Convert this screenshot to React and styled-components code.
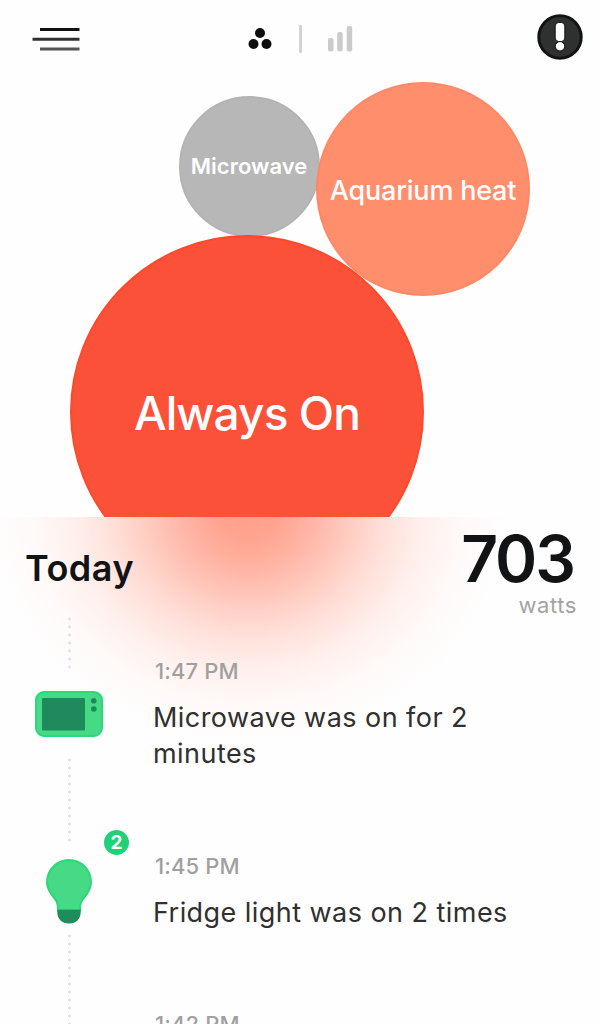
import React from "react";
import styled, { createGlobalStyle } from "styled-components";

const GlobalStyle = createGlobalStyle`
  *, *::before, *::after { box-sizing: border-box; }
  body { margin: 0; background: #fefefe; }
`;

const Screen = styled.div`
  display: flex;
  flex-direction: column;
  width: 600px;
  height: 1024px;
  overflow: hidden;
  background: #fefefe;
  color: #111314;
  font-family: Inter, "Liberation Sans", sans-serif;
`;

const Header = styled.header`
  display: grid;
  grid-template-columns: 1fr auto 1fr;
  align-items: center;
  height: 78px;
  flex: none;
  padding: 0 16px 0 31px;
`;

const IconButton = styled.button`
  display: flex;
  padding: 0;
  border: 0;
  background: none;
  justify-self: ${(p) => p.$side};
  margin-bottom: ${(p) => p.$lift || 0}px;
`;

const ViewSwitch = styled.nav`
  display: flex;
  align-items: center;
  gap: 25px;
  margin-right: 14px;
`;

const Divider = styled.span`
  width: 3px;
  height: 28px;
  border-radius: 1px;
  background: #d3d3d3;
  margin-left: 2px;
`;

const BubbleStage = styled.section`
  position: relative;
  height: 439px;
  flex: none;
  overflow: hidden;
`;

const Bubble = styled.div`
  position: absolute;
  left: ${(p) => p.$x - p.$r}px;
  top: ${(p) => p.$y - p.$r}px;
  width: ${(p) => p.$r * 2}px;
  height: ${(p) => p.$r * 2}px;
  border-radius: 50%;
  border: 2px solid ${(p) => p.$edge};
  background: ${(p) => p.$fill};
  display: flex;
  align-items: center;
  justify-content: center;
  color: #fff;
  white-space: nowrap;
  font-size: ${(p) => p.$size}px;
  font-weight: ${(p) => p.$weight};
  letter-spacing: ${(p) => p.$track}px;
  line-height: 1.3;
  padding-top: ${(p) => p.$drop}px;
`;

const Feed = styled.main`
  flex: 1;
  min-height: 0;
  background: radial-gradient(
    ellipse 260px 235px at 248px -6px,
    #ff9f8a 0%,
    #ffa490 12%,
    #ffb5a5 25%,
    #ffcbc0 39%,
    #ffe0d9 53%,
    #fff0ed 68%,
    #fffaf9 84%,
    #fefefe 100%
  );
`;

const Summary = styled.div`
  display: flex;
  justify-content: space-between;
  height: 100px;
  padding: 0 25px;
`;

const Title = styled.h1`
  margin: 28px 0 0;
  font-size: 36px;
  line-height: 46px;
  font-weight: 600;
  letter-spacing: 0.5px;
`;

const Usage = styled.div`
  display: flex;
  flex-direction: column;
  align-items: flex-end;
  padding-top: 9px;
`;

const UsageValue = styled.strong`
  margin-right: 1px;
  font-size: 64px;
  line-height: 66px;
  font-weight: 600;
  letter-spacing: -2px;
`;

const UsageUnit = styled.span`
  margin-right: -2px;
  font-size: 22px;
  line-height: 26px;
  letter-spacing: 0.6px;
  color: #a3a3a3;
`;

const Entry = styled.article`
  display: flex;
  height: ${(p) => p.$height}px;
`;

const Rail = styled.div`
  display: flex;
  flex-direction: column;
  align-items: center;
  width: 138px;
  flex: none;
`;

const Dots = styled.span`
  width: 3px;
  height: ${(p) => p.$height}px;
  background: radial-gradient(circle at 50% 50%, #e6e1ef 1.4px, transparent 1.8px) 0 -2px / 3px 8px repeat-y;
`;

const IconSlot = styled.div`
  position: relative;
  display: flex;
  align-items: center;
  justify-content: center;
  width: 100%;
  height: ${(p) => p.$height}px;
  padding-top: ${(p) => p.$drop || 0}px;
`;

const Badge = styled.span`
  position: absolute;
  left: 104px;
  top: -16px;
  width: 25px;
  height: 25px;
  border-radius: 50%;
  background: #1fd27a;
  color: #fff;
  font-size: 19px;
  line-height: 25px;
  font-weight: 700;
  text-align: center;
`;

const Details = styled.div`
  padding: ${(p) => p.$top}px 0 0 17px;
`;

const Time = styled.time`
  display: block;
  font-size: 22px;
  line-height: 28px;
  font-weight: 500;
  letter-spacing: 0.1px;
  color: #a0a0a0;
`;

const Message = styled.p`
  margin: 15px 0 0 -2px;
  font-size: 27px;
  line-height: 36px;
  font-weight: 400;
  letter-spacing: 0.45px;
  white-space: pre;
  color: #303030;
`;

const MenuIcon = () => (
  <svg width="50" height="26" viewBox="0 0 50 26">
    <path d="M9 3.5H48.5" stroke="#111" strokeWidth="3" />
    <path d="M1.5 13.2H48.5" stroke="#303030" strokeWidth="3" />
    <path d="M9 22.9H48.5" stroke="#555" strokeWidth="3" />
  </svg>
);

const BubblesIcon = () => (
  <svg width="24" height="24" viewBox="0 0 24 24" fill="#0d0d0d">
    <circle cx="12" cy="6" r="5" />
    <circle cx="5.5" cy="17" r="5" />
    <circle cx="18.5" cy="17" r="5" />
  </svg>
);

const BarsIcon = () => (
  <svg width="26" height="26" viewBox="0 0 26 26" fill="#cbcbcb">
    <rect x="1" y="12" width="5.5" height="13.5" rx="2" />
    <rect x="10.2" y="6" width="5.5" height="19.5" rx="2" />
    <rect x="19.7" y="0" width="5.5" height="25.5" rx="2" />
  </svg>
);

const AlertIcon = () => (
  <svg width="48" height="48" viewBox="0 0 48 48">
    <circle cx="24" cy="24" r="21.2" fill="#2f3130" stroke="#121413" strokeWidth="3" />
    <rect x="19.2" y="9.5" width="9.6" height="19" rx="3.5" fill="#fff" stroke="#111" strokeWidth="1" />
    <circle cx="24" cy="33.3" r="4.7" fill="#fff" stroke="#111" strokeWidth="1" />
  </svg>
);

const MicrowaveIcon = () => (
  <svg width="68" height="46" viewBox="0 0 68 46">
    <rect x="1" y="1" width="66" height="44" rx="8" fill="#46d986" stroke="#2bd87b" strokeWidth="2" />
    <rect x="7" y="7" width="43" height="32.5" rx="1" fill="#1f8a5c" />
    <circle cx="58.8" cy="9.7" r="2.8" fill="#1f8a5c" />
    <circle cx="58.8" cy="18" r="2.8" fill="#1f8a5c" />
  </svg>
);

const BulbIcon = () => (
  <svg width="46" height="65" viewBox="0 0 46 65">
    <path
      d="M23 1C10.8 1 1 10.8 1 23C1 30 4.5 34.5 7.5 38C10.5 41.5 12 44 12 51H34C34 44 35.5 41.5 38.5 38C41.5 34.5 45 30 45 23C45 10.8 35.2 1 23 1Z"
      fill="#46d986"
      stroke="#2bd87b"
      strokeWidth="2"
    />
    <path d="M11.3 50.7H34.7V53C34.7 60 30 64.5 23 64.5S11.3 60 11.3 53Z" fill="#1d8d5c" />
  </svg>
);

const bubbles = [
  { name: "Microwave", x: 249, y: 88, r: 70.5, size: 22, weight: 600, track: 0, drop: 1, fill: "#b7b7b7", edge: "#b3b3b3" },
  { name: "Aquarium heat", x: 423, y: 110.5, r: 107, size: 27, weight: 500, track: -0.2, drop: 4, fill: "#ff8e6d", edge: "#ff8967" },
  { name: "Always On", x: 247, y: 333.5, r: 177, size: 46, weight: 500, track: -0.9, drop: 4, fill: "#fb5139", edge: "#fc4a2b" },
];

export default function App() {
  return (
    <>
      <GlobalStyle />
      <Screen>
        <Header>
          <IconButton $side="start" aria-label="Menu"><MenuIcon /></IconButton>
          <ViewSwitch>
            <BubblesIcon />
            <Divider />
            <BarsIcon />
          </ViewSwitch>
          <IconButton $side="end" $lift={4} aria-label="Alerts"><AlertIcon /></IconButton>
        </Header>
        <BubbleStage>
          {bubbles.map((b) => (
            <Bubble key={b.name} $x={b.x} $y={b.y} $r={b.r} $size={b.size} $weight={b.weight} $track={b.track} $drop={b.drop} $fill={b.fill} $edge={b.edge}>
              {b.name}
            </Bubble>
          ))}
        </BubbleStage>
        <Feed>
          <Summary>
            <Title>Today</Title>
            <Usage>
              <UsageValue>703</UsageValue>
              <UsageUnit>watts</UsageUnit>
            </Usage>
          </Summary>
          <Entry $height={229}>
            <Rail>
              <Dots $height={52} />
              <IconSlot $height={89}><MicrowaveIcon /></IconSlot>
              <Dots $height={88} />
            </Rail>
            <Details $top={40}>
              <Time>1:47 PM</Time>
              <Message>{"Microwave was on for 2\nminutes"}</Message>
            </Details>
          </Entry>
          <Entry $height={160}>
            <Rail>
              <IconSlot $height={88} $drop={2}>
                <BulbIcon />
                <Badge>2</Badge>
              </IconSlot>
              <Dots $height={72} />
            </Rail>
            <Details $top={6}>
              <Time>1:45 PM</Time>
              <Message>Fridge light was on 2 times</Message>
            </Details>
          </Entry>
          <Entry $height={60}>
            <Rail>
              <Dots $height={60} />
            </Rail>
            <Details $top={4}>
              <Time>1:42 PM</Time>
            </Details>
          </Entry>
        </Feed>
      </Screen>
    </>
  );
}
